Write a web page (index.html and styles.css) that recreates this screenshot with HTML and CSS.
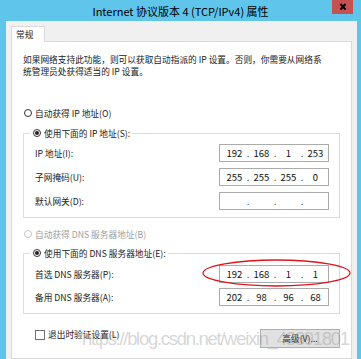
FILE: index.html
```html
<!DOCTYPE html>
<html lang="zh-CN">
<head>
  <meta charset="UTF-8">
  <title>Internet 协议版本 4 (TCP/IPv4) 属性</title>
  <link rel="stylesheet" href="styles.css">
</head>
<body>
  <div class="window">
    <!-- Title bar -->
    <div class="titlebar">
      <span class="title">Internet 协议版本 4 (TCP/IPv4) 属性</span>
      <button class="close" aria-label="关闭">
        <svg width="20" height="14" viewBox="0 0 20 14">
          <path d="M8.5 4 L13.5 9.5 M13.5 4 L8.5 9.5" stroke="#000" stroke-width="2" fill="none"/>
        </svg>
      </button>
    </div>

    <div class="frame">
      <div class="dialog">
        <div class="tabs"><span class="tab">常规</span></div>

        <div class="panel">
          <p class="intro">如果网络支持此功能，则可以获取自动指派的 IP 设置。否则，你需要从网络系<br>统管理员处获得适当的 IP 设置。</p>

          <label class="radio"><span class="dot"></span>自动获得 IP 地址(O)</label>

          <fieldset class="group">
            <legend><label class="radio checked"><span class="dot"></span>使用下面的 IP 地址(S):</label></legend>
            <div class="row">
              <span>IP 地址(I):</span>
              <div class="ip"><span>192</span><i>.</i><span>168</span><i>.</i><span>1</span><i>.</i><span>253</span></div>
            </div>
            <div class="row">
              <span>子网掩码(U):</span>
              <div class="ip"><span>255</span><i>.</i><span>255</span><i>.</i><span>255</span><i>.</i><span>0</span></div>
            </div>
            <div class="row">
              <span>默认网关(D):</span>
              <div class="ip"><span></span><i>.</i><span></span><i>.</i><span></span><i>.</i><span></span></div>
            </div>
          </fieldset>

          <label class="radio disabled dns-auto"><span class="dot"></span>自动获得 DNS 服务器地址(B)</label>

          <fieldset class="group dns">
            <legend><label class="radio checked"><span class="dot"></span>使用下面的 DNS 服务器地址(E):</label></legend>
            <div class="row">
              <span>首选 DNS 服务器(P):</span>
              <div class="ip marked">
                <span>192</span><i>.</i><span>168</span><i>.</i><span>1</span><i>.</i><span>1</span>
                <svg class="mark" width="149" height="28" viewBox="0 0 149 28">
                  <ellipse cx="74.5" cy="14" rx="73.5" ry="13" fill="none" stroke="#e0141e" stroke-width="1.3"/>
                </svg>
              </div>
            </div>
            <div class="row">
              <span>备用 DNS 服务器(A):</span>
              <div class="ip"><span>202</span><i>.</i><span>98</span><i>.</i><span>96</span><i>.</i><span>68</span></div>
            </div>
          </fieldset>

          <div class="footer">
            <label class="check"><span class="box"></span>退出时验证设置(L)</label>
            <button class="advanced">高级(V)...</button>
          </div>
        </div>

        <div class="watermark">https://blog.csdn.net/weixin_43891801</div>
      </div>
    </div>
  </div>
</body>
</html>
```

FILE: styles.css
```css
/* Reset */
* {
  margin: 0;
  padding: 0;
  box-sizing: border-box;
}

body {
  font-family: "Noto Sans CJK SC", "Noto Sans", sans-serif;
  font-size: 8.7px;
  color: #1a1a1a;
  background: #5fc5eb;
  overflow: hidden;
}

/* Window chrome */
.window {
  height: 359px;
  display: flex;
  flex-direction: column;
  background: #5fc5eb;
}

.titlebar {
  position: relative;
  height: 21px;
  flex-shrink: 0;
  display: flex;
  align-items: center;
  justify-content: center;
}

.title {
  font-size: 11px;
  color: #000;
  padding-top: 1px;
}

.close {
  position: absolute;
  top: 0;
  right: 8px;
  width: 21px;
  height: 14px;
  border: none;
  background: #c75050;
  display: flex;
}

.frame {
  flex: 1;
  display: flex;
  padding: 0 4px 0 6px;
  min-height: 0;
}

.dialog {
  position: relative;
  flex: 1;
  display: flex;
  flex-direction: column;
  background: #f0f0f0;
  padding: 5px 5px 0 5px;
  overflow: hidden;
}

/* Tabs */
.tabs {
  display: flex;
}

.tab {
  position: relative;
  z-index: 1;
  width: 34px;
  height: 16px;
  margin-bottom: -1px;
  padding: 2px 0 0 4px;
  background: #fff;
  border: 1px solid #d9d9d9;
  border-bottom: none;
  line-height: 12px;
}

.panel {
  flex: 1;
  background: #fff;
  border: 1px solid #d9d9d9;
  padding: 12px 11px 0 11px;
}

.intro {
  line-height: 12px;
}

/* Radios */
.radio {
  display: flex;
  align-items: center;
  height: 20px;
  margin-top: 25px;
}

.radio .dot {
  width: 8px;
  height: 8px;
  margin: 0 3px 0 1px;
  border: 1px solid #333;
  border-radius: 50%;
  background: #fff;
  display: flex;
  align-items: center;
  justify-content: center;
}

.radio.checked .dot::after {
  content: "";
  width: 4px;
  height: 4px;
  border-radius: 50%;
  background: #222;
}

.radio.disabled {
  color: #a0a0a0;
}

.radio.disabled .dot {
  border-color: #c4c4c4;
}

.dns-auto {
  margin-top: 6px;
}

/* Group boxes */
.group {
  margin-top: 3px;
  border: 1px solid #dcdcdc;
  padding: 4px 10px 7px 11px;
  display: flex;
  flex-direction: column;
  gap: 6px;
}

.group.dns {
  margin-top: 2px;
  padding-top: 5px;
  gap: 5px;
}

.group legend {
  margin-left: -5px;
  padding: 0 2px;
}

.group legend .radio {
  margin-top: 0;
  height: 14px;
}

.row {
  display: flex;
  align-items: center;
  justify-content: space-between;
  height: 18px;
}

.ip {
  position: relative;
  width: 110px;
  height: 18px;
  display: flex;
  align-items: center;
  padding-left: 3px;
  border: 1px solid #ababab;
  background: #fff;
  font-size: 9.5px;
  color: #111;
}

.ip span {
  width: 23px;
  text-align: center;
}

.ip i {
  width: 4px;
  font-style: normal;
  text-align: center;
}

.mark {
  position: absolute;
  left: -18px;
  top: -7px;
}

/* Footer */
.footer {
  display: flex;
  justify-content: space-between;
  align-items: flex-start;
  margin-top: 15px;
  padding-left: 12px;
}

.check {
  display: flex;
  align-items: center;
  gap: 3px;
  line-height: 11px;
}

.check .box {
  width: 10px;
  height: 10px;
  border: 1px solid #707070;
  background: #fff;
}

.advanced {
  width: 80px;
  height: 19px;
  background: #e1e1e1;
  border: 1px solid #adadad;
  font-family: inherit;
  font-size: 8.7px;
  color: #1a1a1a;
}

/* Blog watermark over the bottom of the dialog */
.watermark {
  position: absolute;
  left: 76px;
  top: 307px;
  font-family: "Liberation Sans", Arial, sans-serif;
  font-size: 18.5px;
  letter-spacing: -1.3px;
  line-height: 22px;
  color: rgba(150, 150, 150, 0.4);
  white-space: nowrap;
  pointer-events: none;
}
```
